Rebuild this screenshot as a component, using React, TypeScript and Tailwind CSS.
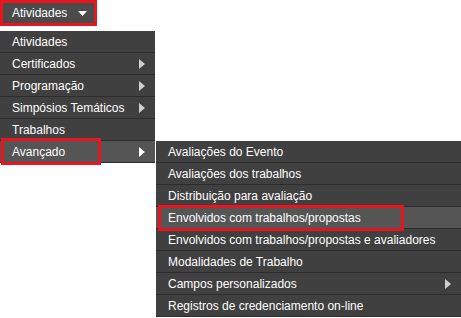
import React from "react";

const Arrow = ({ white }: { white?: boolean }) => (
  <svg width="6" height="10" viewBox="0 0 6 10" className="shrink-0">
    <path d="M0 0 L6 5 L0 10 Z" fill={white ? "#ffffff" : "#d0d0d0"} />
  </svg>
);

const mainItems: { label: string; arrow?: boolean; active?: boolean }[] = [
  { label: "Atividades" },
  { label: "Certificados", arrow: true },
  { label: "Programação", arrow: true },
  { label: "Simpósios Temáticos", arrow: true },
  { label: "Trabalhos" },
  { label: "Avançado", arrow: true, active: true },
];

const subItems: { label: string; arrow?: boolean; active?: boolean }[] = [
  { label: "Avaliações do Evento" },
  { label: "Avaliações dos trabalhos" },
  { label: "Distribuição para avaliação" },
  { label: "Envolvidos com trabalhos/propostas", active: true },
  { label: "Envolvidos com trabalhos/propostas e avaliadores" },
  { label: "Modalidades de Trabalho" },
  { label: "Campos personalizados", arrow: true },
  { label: "Registros de credenciamento on-line" },
];

export default function App() {
  return (
    <div
      className="relative w-[461px] h-[318px] bg-white overflow-hidden text-[12px] text-white"
      style={{ fontFamily: '"Liberation Sans", Arial, sans-serif' }}
    >
      {/* Top button */}
      <div className="w-[97px] h-[26px] border-[3px] border-[#e8151f] bg-[#4b4b4b] flex items-center pl-[9px] gap-[11px]">
        <span className="leading-none">Atividades</span>
        <svg width="9" height="5" viewBox="0 0 9 5">
          <path d="M0 0 L9 0 L4.5 5 Z" fill="#ffffff" />
        </svg>
      </div>

      {/* Main menu */}
      <div className="mt-[5px] w-[155px] bg-[#404040] flex flex-col">
        {mainItems.map((it) => (
          <div
            key={it.label}
            className={`h-[22px] border-b border-[#2c2c2c] flex items-center justify-between pl-[12px] pr-[10px] ${
              it.active ? "bg-[#555555]" : ""
            }`}
          >
            <span className="leading-none">{it.label}</span>
            {it.arrow && <Arrow white={it.active} />}
          </div>
        ))}
      </div>

      {/* Submenu flyout */}
      <div className="absolute left-[156px] top-[141px] w-[305px] bg-[#404040] flex flex-col">
        {subItems.map((it) => (
          <div
            key={it.label}
            className={`h-[22px] border-b border-[#2c2c2c] flex items-center justify-between pl-[12px] pr-[10px] ${
              it.active ? "bg-[#555555]" : ""
            }`}
          >
            <span className="leading-none">{it.label}</span>
            {it.arrow && <Arrow />}
          </div>
        ))}
      </div>

      {/* Red annotation boxes */}
      <div className="absolute left-[1px] top-[138px] w-[100px] h-[27px] border-[3px] border-[#e8151f]" />
      <div className="absolute left-[158px] top-[205px] w-[246px] h-[26px] border-[3px] border-[#e8151f]" />
    </div>
  );
}
